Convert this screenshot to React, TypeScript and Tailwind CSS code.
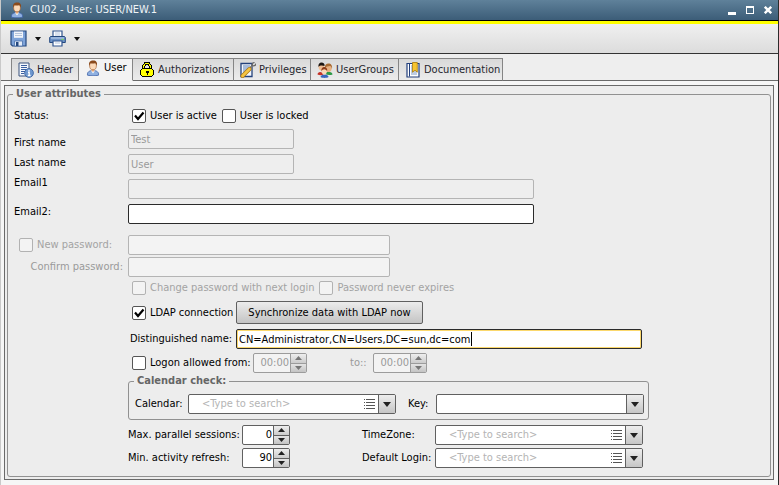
import type { ReactNode } from "react";

const field = "h-5 min-w-0 rounded-[2px] border px-[2px] text-[11px] leading-4 outline-none";
const readOnlyField = field + " border-[#b4b4b4] bg-[#eeeeee] text-[#9a9a9a]";

function UserIcon() {
  return (
    <svg width="16" height="16" viewBox="0 0 16 16" className="shrink-0" aria-hidden="true">
      <path d="M2.500 15.200C2 12 4.300 10.500 8 10.500s6 1.500 5.500 4.700c-3 .8-8 .8-11 0z" fill="#8fb0e0" stroke="#3f62a8" strokeWidth=".8" />
      <path d="M6 10.500 8 13.500l2-3z" fill="#fff" />
      <path d="M6.600 9h2.800v1.800L8 12l-1.400-1.200z" fill="#e9a978" />
      <ellipse cx="8" cy="5.600" rx="3.400" ry="4.200" fill="#fbd9b8" stroke="#a8683a" strokeWidth=".7" />
      <path d="M4.200 6C3.400 2 5.300.4 8.200.4c3 0 4.500 1.800 3.600 5.600-.4-1.700-1-2.500-1.700-2.800-1.700.6-3.400.4-4.600.1C4.900 3.900 4.500 4.800 4.200 6z" fill="#8a4a1c" />
    </svg>
  );
}

function HeaderIcon() {
  return (
    <svg width="16" height="16" viewBox="0 0 16 16" className="shrink-0" aria-hidden="true">
      <path d="M1 1h10v13H1z" fill="#f5f8fd" stroke="#3b527c" />
      <path d="M3 3.500h6M3 5.500h6M3 7.500h5M3 9.500h4M3 11.500h3" stroke="#3b5fa0" />
      <circle cx="11" cy="11" r="4.400" fill="#6f98cf" stroke="#2f5a9c" strokeWidth=".8" />
      <path d="M11 7.800v1.600M10 10.500h1.200v3M9.800 13.500h2.800" stroke="#fff" strokeWidth="1.300" fill="none" />
    </svg>
  );
}

function LockIcon() {
  return (
    <svg width="16" height="16" viewBox="0 0 16 16" className="shrink-0" shapeRendering="crispEdges" aria-hidden="true">
      <path d="M4.500 7V4l2-2.500h3l2 2.500v3" fill="none" stroke="#000" strokeWidth="3" />
      <path d="M4.500 7V4l2-2.500h3l2 2.500v3" fill="none" stroke="#ff0" strokeWidth="1" />
      <path d="M3.500 6.500h9l2 2v4l-2 2h-9l-2-2v-4z" fill="#ff0" stroke="#000" />
      <path d="M6.500 8.500h3v2h-1v2h-1v-2h-1z" fill="#000" />
    </svg>
  );
}

function PrivilegesIcon() {
  return (
    <svg width="16" height="16" viewBox="0 0 16 16" className="shrink-0" aria-hidden="true">
      <path d="M1 1.500h11v13H1z" fill="#f3f7fd" stroke="#24427c" strokeWidth="1.300" />
      <path d="M3 4h7M3 6h6M3 8h5M3 10h3" stroke="#5c80b8" />
      <path d="M9.500 6.500 13 3" stroke="#777" strokeWidth="1.800" />
      <path d="m12 4 .3-2.500L14.500.3M13 4l2.200-.6.4-1.800" fill="none" stroke="#666" strokeWidth="1.200" />
      <path d="M2.500 14 9.500 7" stroke="#a87413" strokeWidth="4" strokeLinecap="round" />
      <path d="M2.500 14 9.500 7" stroke="#f5c443" strokeWidth="2.600" strokeLinecap="round" />
    </svg>
  );
}

function GroupsIcon() {
  return (
    <svg width="16" height="16" viewBox="0 0 16 16" className="shrink-0" aria-hidden="true">
      <path d="M8 12c0-3 7.500-3 7.500.5-2 .8-5 .8-7.500-.5z" fill="#2e9a48" />
      <path d="M.5 12.500c0-3.500 5-3.500 6 0-2 1-4 1-6 0z" fill="#c43228" />
      <ellipse cx="4.500" cy="4.800" rx="2.900" ry="3.600" fill="#f0bd92" />
      <path d="M1.500 5C1 2 2.500.5 4.500.5S8 1.800 7.500 4C6 3.500 3 2.800 1.500 5z" fill="#1b1512" />
      <ellipse cx="11.500" cy="6" rx="3.200" ry="4" fill="#e8b080" />
      <path d="M8 6c-.5-3 1-4.500 3.500-4.500S15.600 3.500 15 7c-.5-2-1-3-2-3-2 .6-4 .4-5 2z" fill="#a86b32" />
      <path d="M3.500 15c0-3.500 8-3.500 8 0-2 1.200-6 1.200-8 0z" fill="#3767c0" />
      <ellipse cx="7.300" cy="9.200" rx="2.500" ry="3.200" fill="#fbd8b6" />
      <path d="M4.500 9.500c-.5-3 .8-4.500 2.800-4.500s3.400 1.500 2.800 4.500C9.500 7.500 8 7.500 7.300 7.300 6 7.500 5 8 4.500 9.500z" fill="#8c3b18" />
    </svg>
  );
}

function BookIcon() {
  return (
    <svg width="16" height="16" viewBox="0 0 16 16" className="shrink-0" aria-hidden="true">
      <path d="M2 1.500h12v13.500H2z" fill="#fff" stroke="#223f7c" strokeWidth="1.200" />
      <path d="M4.500 2v12.500" stroke="#223f7c" />
      <path d="M6 4h1M6 6h1M6 8h1M6 10h6M6 12h6" stroke="#7c99c8" />
      <path d="M7.500.5h4.800v9.700L10 8.200l-2.500 2z" fill="#f7c52f" stroke="#a87808" strokeWidth=".8" />
    </svg>
  );
}

function SaveIcon() {
  return (
    <svg width="17" height="17" viewBox="0 0 17 17" className="shrink-0" aria-hidden="true">
      <path d="M1 1h15v15H2.500L1 14.500z" fill="#7ea3d8" stroke="#24487f" strokeWidth="1.200" />
      <path d="M4 1.500h9v6.300H4z" fill="#f2f5fa" />
      <path d="M5 3.500h7M5 5.500h7" stroke="#b5c4db" />
      <path d="M4.500 11h8v5h-8z" fill="#e4ecf7" stroke="#4a72ad" strokeWidth=".8" />
      <path d="M6 12h2.500v4H6z" fill="#24487f" />
    </svg>
  );
}

function PrintIcon() {
  return (
    <svg width="17" height="17" viewBox="0 0 17 17" className="shrink-0" aria-hidden="true">
      <path d="M4 7V1h9v6" fill="#fff" stroke="#31558f" strokeWidth="1.200" />
      <path d="M6 3h5M6 5h5" stroke="#b4c5de" />
      <path d="M1.500 6.500h14l.8 1v5H.7v-5z" fill="#6f94c8" stroke="#24487f" />
      <path d="M2 8h13" stroke="#c2d5ee" />
      <path d="M12.500 9.500h2" stroke="#7ddc4c" strokeWidth="1.200" />
      <path d="M4 11h9v5H4z" fill="#fff" stroke="#31558f" strokeWidth="1.200" />
      <path d="M6 13h5" stroke="#b4c5de" />
    </svg>
  );
}

function Down() {
  return (
    <svg width="8" height="5" viewBox="0 0 8 5" aria-hidden="true">
      <path d="M0 0h8L4 5z" fill="#222" />
    </svg>
  );
}

function MenuArrow() {
  return (
    <svg width="6" height="4" viewBox="0 0 6 4" aria-hidden="true">
      <path d="M0 0h6L3 4z" fill="#111" />
    </svg>
  );
}

function Check({ id, label, checked, disabled }: { id: string; label: string; checked?: boolean; disabled?: boolean }) {
  return (
    <span className="flex items-center gap-1">
      <span className="relative flex">
        <input
          id={id}
          type="checkbox"
          defaultChecked={checked}
          disabled={disabled}
          className="peer size-[14px] appearance-none rounded-[2px] border border-[#555555] bg-white disabled:border-[#b2b2b2] disabled:bg-[#f3f3f3]"
        />
        <svg viewBox="0 0 14 14" className="pointer-events-none absolute inset-0 hidden size-[14px] peer-checked:block" aria-hidden="true">
          <path d="M3 6.500 6 10l5.500-6.500" fill="none" stroke="#000" strokeWidth="2.200" />
        </svg>
      </span>
      <label htmlFor={id} className={disabled ? "text-[#a3a3a3]" : ""}>
        {label}
      </label>
    </span>
  );
}

function Spinner({ id, value, label, disabled }: { id: string; value: string; label?: string; disabled?: boolean }) {
  const line = disabled ? "border-[#9c9c9c]" : "border-[#606060]";
  const arrow = disabled ? "#777777" : "#222222";
  return (
    <span className={`flex h-5 overflow-hidden rounded-[2px] border ${line} ${disabled ? "w-[54px] bg-[#f3f3f3]" : "w-12 bg-white"}`}>
      <input
        id={id}
        aria-label={label}
        defaultValue={value}
        disabled={disabled}
        className="w-0 min-w-0 flex-1 px-px text-right outline-none disabled:text-[#9a9a9a]"
      />
      <span className={`flex w-4 flex-col border-l ${line}`}>
        <button type="button" aria-label="Increase" disabled={disabled} className={`flex flex-1 items-center justify-center border-b bg-linear-to-b from-[#eeeeee] to-[#cccccc] ${line}`}>
          <svg width="7" height="4" viewBox="0 0 7 4"><path d="M0 4h7L3.500 0z" fill={arrow} /></svg>
        </button>
        <button type="button" aria-label="Decrease" disabled={disabled} className="flex flex-1 items-center justify-center bg-linear-to-b from-[#e4e4e4] to-[#c4c4c4]">
          <svg width="7" height="4" viewBox="0 0 7 4"><path d="M0 0h7L3.500 4z" fill={arrow} /></svg>
        </button>
      </span>
    </span>
  );
}

function SearchCombo({ id }: { id: string }) {
  return (
    <span className="flex h-5 w-[208px] overflow-hidden rounded-[2px] border border-[#606060] bg-white">
      <input id={id} placeholder="<Type to search>" className="w-0 min-w-0 flex-1 pl-[13px] outline-none placeholder:text-[#b4b4b4]" />
      <svg width="11" height="11" viewBox="0 0 11 11" className="mt-1 mr-[3px] shrink-0" shapeRendering="crispEdges" aria-hidden="true">
        <path d="M0 .5h1M2 .5h9M0 3.500h1M2 3.500h9M0 6.500h1M2 6.500h9M0 9.500h1M2 9.500h9" stroke="#555" />
      </svg>
      <button type="button" aria-label="Open list" className="flex w-[17px] items-center justify-center border-l border-[#606060] bg-linear-to-b from-[#eeeeee] to-[#c6c6c6]">
        <Down />
      </button>
    </span>
  );
}

function Tab({ icon, label, width, active }: { icon: ReactNode; label: string; width: string; active?: boolean }) {
  return (
    <button
      type="button"
      role="tab"
      aria-selected={!!active}
      className={`flex h-[23px] items-center gap-[3px] border-t border-r border-[#858585] pl-[6px] whitespace-nowrap ${width} ${
        active ? "border-b border-b-[#f3f3f3] bg-[#f3f3f3] pb-1 text-black" : "border-b border-b-[#6a6a6a] bg-linear-to-b from-[#d9d9d9] to-[#ececec] text-[#26262e]"
      }`}
    >
      {icon}
      {label}
    </button>
  );
}

function Group({ title, className, legend, children }: { title: string; className: string; legend: string; children: ReactNode }) {
  return (
    <fieldset className={`min-w-0 rounded-[3px] border border-[#919191] ${className}`}>
      <legend className={`h-[14px] px-[3px] text-[11px] leading-[14px] font-bold text-[#666666] ${legend}`}>{title}</legend>
      {children}
    </fieldset>
  );
}

export default function App() {
  return (
    <div className="flex min-h-screen w-full flex-col border-r border-l border-r-[#2b2b2b] border-l-[#c9c9c9] bg-[#f6f6f6] font-['DejaVu_Sans_Condensed','DejaVu_Sans',sans-serif] text-[11px] leading-[14px] text-black">
      <header className="flex h-[21px] items-center gap-[5px] border-b border-black bg-linear-to-b from-[#5f819a] to-[#3c5d78] pl-2 text-[#f0f4f7]">
        <UserIcon />
        <h1 className="flex-1">CU02 - User: USER/NEW.1</h1>
        <div className="flex items-center gap-[10px] pr-[6px]">
          <button type="button" aria-label="Minimize" className="flex h-3 items-end pb-px">
            <span className="h-[3px] w-2 bg-white" />
          </button>
          <button type="button" aria-label="Maximize" className="h-[8px] w-2 border border-t-2 border-white" />
          <button type="button" aria-label="Close">
            <svg width="8" height="8" viewBox="0 0 8 8"><path d="m.8.8 6.400 6.400M7.200.8.8 7.200" stroke="#fff" strokeWidth="2.400" /></svg>
          </button>
        </div>
      </header>
      <div className="h-[3px] bg-[#ffff00]" />
      <div className="flex h-[30px] items-center border-b border-[#333333] bg-linear-to-b from-[#f0f0f0] to-[#dcdcdc] pl-[9px]">
        <button type="button" aria-label="Save"><SaveIcon /></button>
        <button type="button" aria-label="Save options" className="ml-2"><MenuArrow /></button>
        <button type="button" aria-label="Print" className="ml-2"><PrintIcon /></button>
        <button type="button" aria-label="Print options" className="ml-2"><MenuArrow /></button>
      </div>
      <div role="tablist" className="flex bg-[#eeeeee] pt-1">
        <span className="w-[10px] border-b border-[#6a6a6a]" />
        <span className="w-px bg-[#858585]" />
        <Tab icon={<HeaderIcon />} label="Header" width="w-[67px]" />
        <Tab icon={<UserIcon />} label="User" width="w-[54px]" active />
        <Tab icon={<LockIcon />} label="Authorizations" width="w-[101px]" />
        <Tab icon={<PrivilegesIcon />} label="Privileges" width="w-[77px]" />
        <Tab icon={<GroupsIcon />} label="UserGroups" width="w-[88px]" />
        <Tab icon={<BookIcon />} label="Documentation" width="w-[104px]" />
        <span className="flex-1 border-b border-[#6a6a6a]" />
      </div>
      <main className="mt-1 mr-1 mb-1 ml-[3px] border border-[#6a6a6a] bg-[#ededed] px-[2px] pt-px pb-[2px]">
        <Group title="User attributes" className="pb-2 pl-[6px]" legend="-ml-px">
          <div className="box-content flex h-5 items-center pt-[5px]">
            <span className="w-[118px]">Status:</span>
            <div className="flex gap-[5px]">
              <Check id="active" label="User is active" checked />
              <Check id="locked" label="User is locked" />
            </div>
          </div>

          <div className="mt-[3px] flex">
            <div className="flex w-[114px] flex-col pt-1 leading-5">
              <label htmlFor="first">First name</label>
              <label htmlFor="last">Last name</label>
              <label htmlFor="email1">Email1</label>
              <label htmlFor="email2" className="mt-[9px]">Email2:</label>
            </div>
            <div className="flex min-w-0 flex-1 flex-col gap-[5px]">
              <input id="first" defaultValue="Test" disabled className={`w-[166px] ${readOnlyField}`} />
              <input id="last" defaultValue="User" disabled className={`w-[166px] ${readOnlyField}`} />
              <input id="email1" disabled className={`w-[406px] ${readOnlyField}`} />
              <input id="email2" className={`w-[406px] border-[#2b2b2b] bg-white ${field}`} />
            </div>
          </div>

          <div className="mt-[11px] flex items-center">
            <div className="w-[114px] pl-[5px]">
              <Check id="newpw" label="New password:" disabled />
            </div>
            <input aria-label="New password" type="password" disabled className={`w-[262px] border-[#b4b4b4] bg-[#f3f3f3] ${field}`} />
          </div>
          <div className="mt-[2px] flex items-center">
            <label htmlFor="confirm" className="w-[114px] pr-[5px] text-right text-[#9a9a9a]">Confirm password:</label>
            <input id="confirm" type="password" disabled className={`w-[262px] border-[#b4b4b4] bg-[#f3f3f3] ${field}`} />
          </div>

          <div className="pl-[114px]">
            <div className="mt-px flex h-5 items-center gap-[5px] pl-1">
              <Check id="change" label="Change password with next login" disabled />
              <Check id="never" label="Password never expires" disabled />
            </div>
            <div className="mt-[3px] flex">
              <div className="flex w-[108px] pl-1">
                <Check id="ldap" label="LDAP connection" checked />
              </div>
              <button type="button" className="h-[23px] w-[187px] rounded-[2px] border border-[#606060] bg-linear-to-b from-[#ececec] to-[#c4c4c4]">
                Synchronize data with LDAP now
              </button>
            </div>
            <div className="mt-[5px] flex items-center">
              <label htmlFor="dn" className="w-[108px] pl-[2px]">Distinguished name:</label>
              <span className="relative flex">
                <input
                  id="dn"
                  defaultValue="CN=Administrator,CN=Users,DC=sun,dc=com"
                  className={`w-[406px] border-[#2b2b2b] bg-white shadow-[inset_0_0_0_1px_#fbd86c] ${field}`}
                />
                <span className="absolute top-[3px] left-[235px] h-[14px] w-px bg-black" />
              </span>
            </div>
            <div className="mt-1 flex items-center">
              <div className="w-[125px] pl-1">
                <Check id="logon" label="Logon allowed from:" />
              </div>
              <Spinner id="from" value="00:00" label="Logon allowed from" disabled />
              <label htmlFor="to" className="w-[66px] pl-[43px] text-[#9a9a9a]">to::</label>
              <Spinner id="to" value="00:00" disabled />
            </div>
            <Group title="Calendar check:" className="mt-px w-[521px] pt-[6px] pb-[5px]" legend="ml-[5px]">
              <div className="flex items-center pl-[6px]">
                <label htmlFor="calendar" className="w-[53px]">Calendar:</label>
                <SearchCombo id="calendar" />
                <label htmlFor="key" className="ml-3 w-7">Key:</label>
                <span className="relative flex h-5 w-[208px]">
                  <select id="key" className="w-full appearance-none rounded-[2px] border border-[#606060] bg-white outline-none">
                    <option></option>
                  </select>
                  <span className="pointer-events-none absolute inset-y-px right-px flex w-[17px] items-center justify-center border-l border-[#606060] bg-linear-to-b from-[#eeeeee] to-[#c6c6c6]">
                    <Down />
                  </span>
                </span>
              </div>
            </Group>
            <div className="mt-[5px] flex flex-col gap-[3px]">
              <div className="flex items-center">
                <label htmlFor="sessions" className="w-[114px] whitespace-nowrap">Max. parallel sessions:</label>
                <Spinner id="sessions" value="0" />
                <label htmlFor="timezone" className="ml-[72px] w-[73px]">TimeZone:</label>
                <SearchCombo id="timezone" />
              </div>
              <div className="flex items-center">
                <label htmlFor="refresh" className="w-[114px] whitespace-nowrap">Min. activity refresh:</label>
                <Spinner id="refresh" value="90" />
                <label htmlFor="login" className="ml-[72px] w-[73px] whitespace-nowrap">Default Login:</label>
                <SearchCombo id="login" />
              </div>
            </div>
          </div>
        </Group>
      </main>
    </div>
  );
}
